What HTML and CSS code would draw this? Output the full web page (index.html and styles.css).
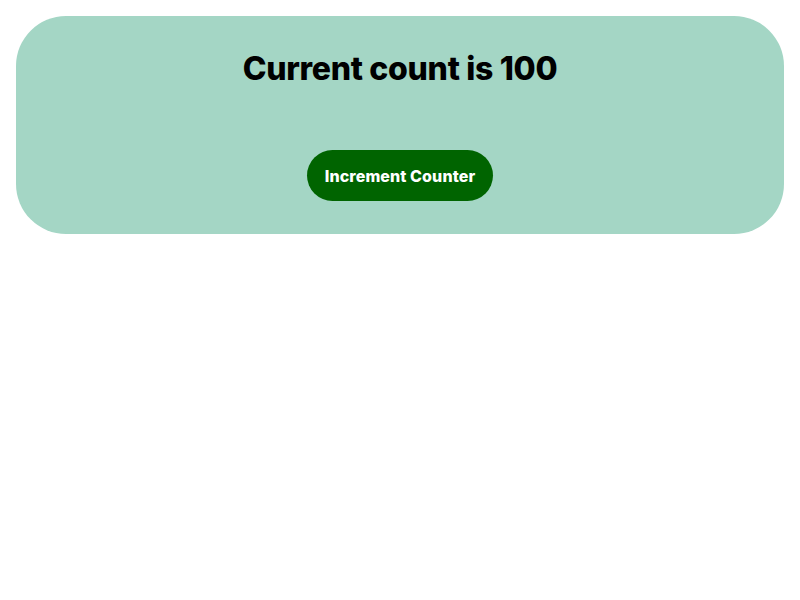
FILE: index.html
```html
<!DOCTYPE html>
<html>
<head>
<meta charset="utf-8">
<link rel="stylesheet" href="styles.css">
</head>
<body>
<div class="card">
  <h1 class="title">Current count is 100</h1>
  <button class="btn">Increment Counter</button>
</div>
</body>
</html>
```
FILE: styles.css
```css
html, body { margin: 0; padding: 0; background: #ffffff; }
body { padding: 16px; font-family: Inter, "Liberation Sans", sans-serif; }
.card {
  background: #a4d6c5;
  border-radius: 50px;
  padding: 33px 16px 33px;
  display: flex;
  flex-direction: column;
  align-items: center;
  gap: 62px;
}
.title {
  margin: 0;
  font-size: 32px;
  font-weight: 800;
  color: #000;
  line-height: 39px;
  letter-spacing: -0.3px;
}
.btn {
  background: #006400;
  color: #fff;
  border: none;
  border-radius: 26px;
  height: 51px;
  padding: 0 18px;
  font-family: Inter, "Liberation Sans", sans-serif;
  font-size: 16px;
  font-weight: 800;
  letter-spacing: 0.1px;
}
```
